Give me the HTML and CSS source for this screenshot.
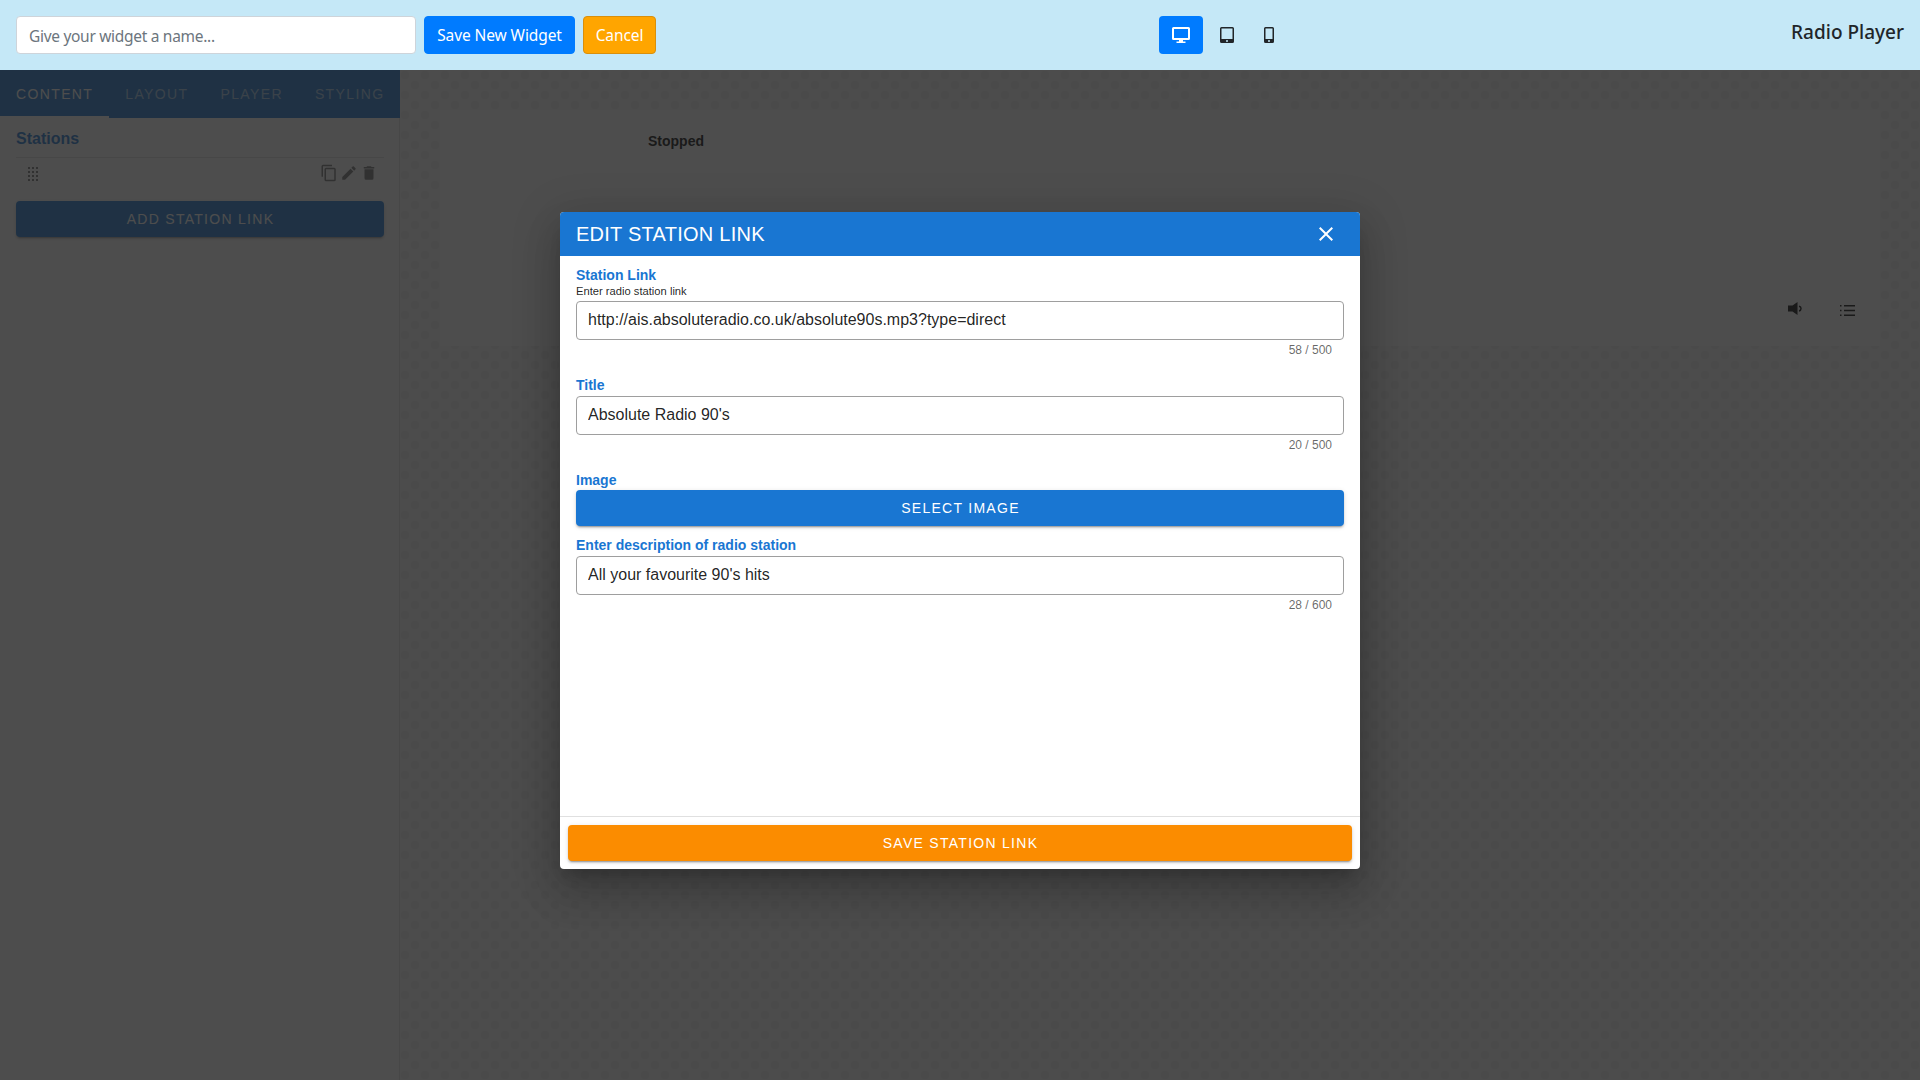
FILE: index.html
```
<!DOCTYPE html>
<html lang="en">
<head>
    <meta charset="UTF-8">
    <meta name="viewport" content="width=device-width, initial-scale=1.0">
    <title>Radio Player</title>
    <link rel="stylesheet" href="styles.css">
</head>
<body>
    <header class="topbar">
        <div class="topbar-left">
            <input class="widget-name" type="text" placeholder="Give your widget a name...">
            <button class="btn btn-primary">Save New Widget</button>
            <button class="btn btn-warning">Cancel</button>
        </div>
        <div class="devices">
            <button class="device active" aria-label="Desktop">
                <svg width="18" height="16" viewBox="0 0 18 16"><path fill="currentColor" fill-rule="evenodd" d="M1.5 0h15A1.5 1.5 0 0 1 18 1.500v10a1.500 1.500 0 0 1-1.500 1.500h-5.500v1.500h2.500V16h-9v-1.500H7V13H1.500A1.500 1.500 0 0 1 0 11.500v-10A1.500 1.500 0 0 1 1.500 0zM2 2v9h14V2z"/></svg>
            </button>
            <button class="device" aria-label="Tablet">
                <svg width="14" height="16" viewBox="0 0 14 16"><path fill="currentColor" fill-rule="evenodd" d="M1.500 0h11A1.500 1.500 0 0 1 14 1.500v13a1.500 1.500 0 0 1-1.500 1.500h-11A1.500 1.500 0 0 1 0 14.500v-13A1.500 1.500 0 0 1 1.500 0zM1.500 1.500V12h11V1.500zM7 13a1 1 0 1 0 0 2 1 1 0 0 0 0-2z"/></svg>
            </button>
            <button class="device" aria-label="Mobile">
                <svg width="10" height="16" viewBox="0 0 10 16"><path fill="currentColor" fill-rule="evenodd" d="M1.500 0h7A1.500 1.500 0 0 1 10 1.500v13A1.500 1.500 0 0 1 8.500 16h-7A1.500 1.500 0 0 1 0 14.500v-13A1.500 1.500 0 0 1 1.500 0zM1.500 1.500V12h7V1.500zM5 13a1 1 0 1 0 0 2 1 1 0 0 0 0-2z"/></svg>
            </button>
        </div>
        <h5 class="widget-type">Radio Player</h5>
    </header>

    <div class="workspace">
        <aside class="sidebar">
            <nav class="tabs">
                <a class="tab active">CONTENT</a>
                <a class="tab">LAYOUT</a>
                <a class="tab">PLAYER</a>
                <a class="tab">STYLING</a>
            </nav>
            <div class="panel">
                <h4 class="panel-title">Stations</h4>
                <div class="station">
                    <svg class="drag" width="10" height="14" viewBox="0 0 10 14"><path stroke="currentColor" stroke-width="2" stroke-dasharray="2 2" fill="none" d="M1 0v14M5 0v14M9 0v14"/></svg>
                    <div class="station-actions">
                        <svg width="18" height="18" viewBox="0 0 24 24"><path fill="currentColor" d="M19 21H8V7h11m0-2H8a2 2 0 0 0-2 2v14a2 2 0 0 0 2 2h11a2 2 0 0 0 2-2V7a2 2 0 0 0-2-2m-3-4H4a2 2 0 0 0-2 2v14h2V3h12V1z"/></svg>
                        <svg width="18" height="18" viewBox="0 0 24 24"><path fill="currentColor" d="M20.710 7.040c.390-.390.390-1.040 0-1.410l-2.340-2.340c-.370-.390-1.020-.390-1.410 0l-1.840 1.830 3.750 3.750M3 17.250V21h3.750L17.810 9.930l-3.750-3.750L3 17.250z"/></svg>
                        <svg width="18" height="18" viewBox="0 0 24 24"><path fill="currentColor" d="M19 4h-3.500l-1-1h-5l-1 1H5v2h14M6 19a2 2 0 0 0 2 2h8a2 2 0 0 0 2-2V7H6v12z"/></svg>
                    </div>
                </div>
                <button class="v-btn add-station">ADD STATION LINK</button>
            </div>
        </aside>

        <main class="preview">
            <div class="player">
                <div class="player-status">Stopped</div>
                <div class="player-controls">
                    <svg width="14" height="14" viewBox="0 0 14 14"><path fill="currentColor" d="M0 3.600h4.500L9.500 0v13L4.500 9.600H0z"/><path stroke="currentColor" stroke-width="1.500" fill="none" d="M11 4.200c2.700.600 2.700 4.200 0 4.800"/></svg>
                    <svg class="list" width="15" height="11" viewBox="0 0 15 11"><path fill="currentColor" d="M0 0h1.500v1.500H0zM4 0h11v1.500H4zM0 4.700h1.500v1.500H0zM4 4.700h11v1.500H4zM0 9.500h1.500V11H0zM4 9.500h11V11H4z"/></svg>
                </div>
            </div>
        </main>

        <div class="overlay">
            <div class="dialog">
                <div class="dialog-header">
                    <span>EDIT STATION LINK</span>
                    <svg width="24" height="24" viewBox="0 0 24 24"><path fill="currentColor" d="M19 6.410 17.590 5 12 10.590 6.410 5 5 6.410 10.590 12 5 17.590 6.410 19 12 13.410 17.590 19 19 17.590 13.410 12z"/></svg>
                </div>
                <div class="dialog-body">
                    <div class="field">
                        <label for="link">Station Link</label>
                        <small class="hint">Enter radio station link</small>
                        <input id="link" type="text" value="http://ais.absoluteradio.co.uk/absolute90s.mp3?type=direct">
                        <div class="counter">58 / 500</div>
                    </div>
                    <div class="field">
                        <label for="title">Title</label>
                        <input id="title" type="text" value="Absolute Radio 90's">
                        <div class="counter">20 / 500</div>
                    </div>
                    <div class="field field-image">
                        <label>Image</label>
                        <button class="v-btn">SELECT IMAGE</button>
                    </div>
                    <div class="field">
                        <label for="description">Enter description of radio station</label>
                        <input id="description" type="text" value="All your favourite 90's hits">
                        <div class="counter">28 / 600</div>
                    </div>
                </div>
                <div class="dialog-footer">
                    <button class="v-btn save">SAVE STATION LINK</button>
                </div>
            </div>
        </div>
    </div>
</body>
</html>
```
FILE: styles.css
```
* {
    box-sizing: border-box;
}
body {
    margin: 0;
    height: 100vh;
    display: flex;
    flex-direction: column;
    overflow: hidden;
    font-family: "Liberation Sans", Arial, sans-serif;
    color: rgba(0, 0, 0, 0.87);
}
svg {
    display: block;
}

/* top bar */
.topbar {
    height: 70px;
    padding: 0 16px;
    display: grid;
    grid-template-columns: 1143px auto 1fr;
    align-items: center;
    background-color: #c5e8f7;
    font-family: "Noto Sans", "Open Sans", sans-serif;
    color: #212529;
}
.topbar-left {
    display: flex;
    gap: 8px;
}
.widget-name {
    width: 400px;
    height: 38px;
    padding: 2px 12px 0;
    border: 1px solid #ced4da;
    border-radius: 4px;
    font-family: inherit;
    font-size: 15.5px;
    letter-spacing: -0.3px;
}
.widget-name::placeholder {
    color: #6c757d;
    opacity: 1;
}
.btn {
    height: 38px;
    padding: 0;
    border: 1px solid #007bff;
    border-radius: 4px;
    font-family: inherit;
    font-size: 15.5px;
    letter-spacing: -0.1px;
    color: #ffffff;
}
.btn-primary {
    width: 151px;
    background-color: #007bff;
}
.btn-warning {
    width: 73px;
    background-color: #ffa500;
    border-color: #d98f0c;
}
.devices {
    display: flex;
}
.device {
    height: 38px;
    width: 42px;
    padding: 0;
    display: flex;
    align-items: center;
    justify-content: center;
    border: none;
    border-radius: 4px;
    background: none;
    color: #212529;
}
.device.active {
    width: 44px;
    margin-right: 3px;
    background-color: #007bff;
    color: #ffffff;
}
.widget-type {
    margin: 0;
    padding-bottom: 6px;
    justify-self: end;
    font-size: 19px;
    font-weight: 500;
}

/* workspace */
.workspace {
    position: relative;
    flex: 1;
    display: flex;
}
.sidebar {
    width: 400px;
    background-color: #ffffff;
    border-right: 1px solid #e0e0e0;
}
.tabs {
    display: flex;
    height: 48px;
    margin-right: -1px;
    background-color: #1976d2;
}
.tab {
    padding: 0 16px;
    line-height: 48px;
    font-size: 14px;
    letter-spacing: 1.37px;
    color: rgba(255, 255, 255, 0.6);
}
.tab.active {
    color: #ffffff;
    border-bottom: 2px solid #ffffff;
}
.panel {
    padding: 0 15px 0 16px;
}
.panel-title {
    margin: 0;
    height: 40px;
    line-height: 41px;
    font-size: 16px;
    color: #1976d2;
    border-bottom: 1px solid #e0e0e0;
}
.station {
    height: 43px;
    padding: 0 6px 14px 12px;
    display: flex;
    align-items: center;
    justify-content: space-between;
    color: #757575;
}
.drag {
    margin-top: 3px;
}
.station-actions {
    display: flex;
    gap: 2px;
}
.v-btn {
    display: block;
    width: 100%;
    height: 36px;
    padding: 0 0 0 1px;
    border: none;
    border-radius: 4px;
    background-color: #1976d2;
    box-shadow: 0 3px 1px -2px rgba(0, 0, 0, 0.2), 0 2px 2px 0 rgba(0, 0, 0, 0.14), 0 1px 5px 0 rgba(0, 0, 0, 0.12);
    font-family: inherit;
    font-size: 14px;
    letter-spacing: 1.28px;
    color: #ffffff;
}
.preview {
    flex: 1;
    padding: 40px;
    background-color: #f8f8f8;
    background-image: radial-gradient(circle, #f0f0f0 4px, transparent 4.500px), radial-gradient(circle, #f0f0f0 4px, transparent 4.500px);
    background-size: 20px 20px;
    background-position: -5px -5px, 5px 5px;
}
.player {
    height: 236px;
    padding: 21px 25px 30px 208px;
    display: flex;
    flex-direction: column;
    justify-content: space-between;
    background-color: #ffffff;
}
.player-status {
    font-size: 14px;
    font-weight: bold;
    line-height: 20px;
    color: #000000;
}
.player-controls {
    display: flex;
    justify-content: flex-end;
    align-items: flex-start;
    gap: 38px;
    color: #000000;
}
.list {
    margin-top: 3px;
}

/* modal */
.overlay {
    position: absolute;
    inset: 0;
    display: flex;
    align-items: flex-start;
    justify-content: center;
    padding-top: 142px;
    background-color: rgba(33, 33, 33, 0.8);
}
.dialog {
    width: 800px;
    height: 657px;
    display: flex;
    flex-direction: column;
    overflow: hidden;
    border-radius: 4px;
    background-color: #ffffff;
    box-shadow: 0 11px 15px -7px rgba(0, 0, 0, 0.2), 0 24px 38px 3px rgba(0, 0, 0, 0.14), 0 9px 46px 8px rgba(0, 0, 0, 0.12);
}
.dialog-header {
    height: 44px;
    padding: 0 22px 0 16px;
    display: flex;
    align-items: center;
    justify-content: space-between;
    background-color: #1976d2;
    color: #ffffff;
    font-size: 20px;
    letter-spacing: 0.25px;
}
.dialog-body {
    flex: 1;
    padding: 11px 16px 0;
}
.field {
    height: 95px;
}
.field:first-child {
    height: 110px;
}
.field-image {
    height: 65px;
}
.field label {
    display: block;
    height: 19px;
    line-height: 17px;
    font-size: 14px;
    font-weight: bold;
    color: #1976d2;
}
.field-image label {
    height: 18px;
}
.field .hint {
    display: block;
    height: 15px;
    line-height: 11px;
    font-size: 11.2px;
}
.field input {
    display: block;
    width: 100%;
    height: 39px;
    padding: 0 11px 2px;
    border: 1px solid #9e9e9e;
    border-radius: 4px;
    font-family: inherit;
    font-size: 16px;
    color: rgba(0, 0, 0, 0.87);
}
.counter {
    padding: 3px 12px 0 0;
    line-height: 14px;
    font-size: 12px;
    text-align: right;
    color: rgba(0, 0, 0, 0.6);
}
.dialog-footer {
    height: 53px;
    padding: 8px;
    border-top: 1px solid #e0e0e0;
}
.save {
    background-color: #fb8c00;
}
```
